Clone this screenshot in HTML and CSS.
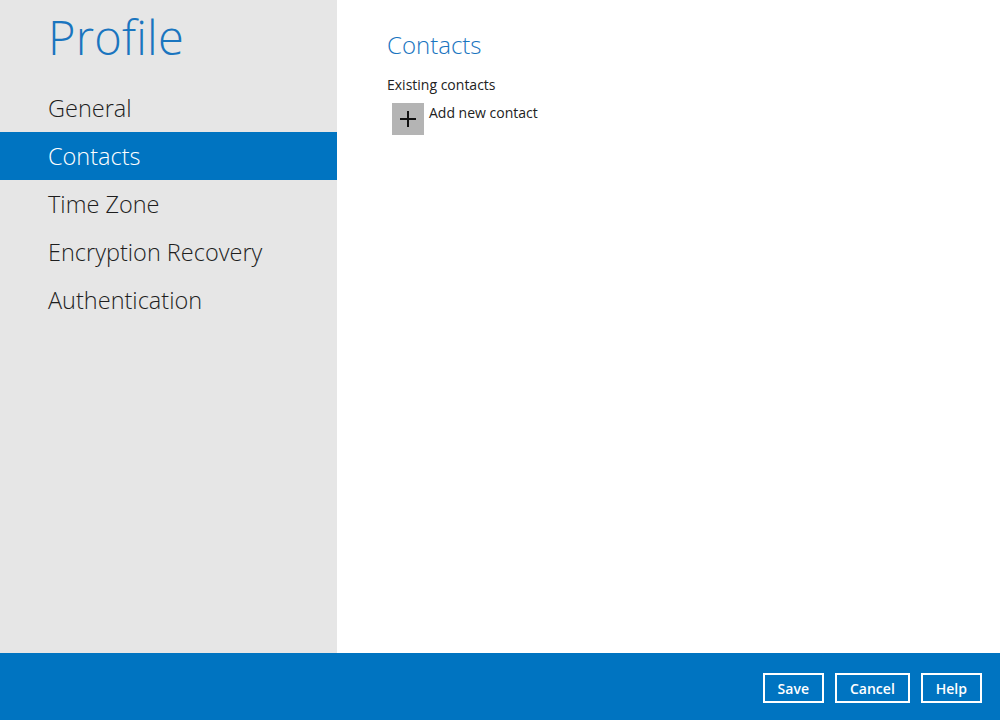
FILE: index.html
```html
<!DOCTYPE html>
<html lang="en">
<head>
<meta charset="UTF-8">
<title>Profile</title>
<link rel="stylesheet" href="styles.css">
</head>
<body>

<div class="main">
  <!-- menu -->
  <aside class="side">
    <h1>Profile</h1>
    <ul class="nav">
      <li>General</li>
      <li class="on">Contacts</li>
      <li>Time Zone</li>
      <li>Encryption Recovery</li>
      <li>Authentication</li>
    </ul>
  </aside>

  <!-- page -->
  <section class="content">
    <h2>Contacts</h2>
    <p class="label">Existing contacts</p>
    <div class="add">
      <span class="plus">
        <svg width="18" height="18" viewBox="0 0 18 18"><path d="M9 1v16M1 9h16" stroke="#111" stroke-width="2"/></svg>
      </span>
      <span>Add new contact</span>
    </div>
  </section>
</div>

<footer class="bar">
  <button>Save</button>
  <button>Cancel</button>
  <button>Help</button>
</footer>

</body>
</html>
```

FILE: styles.css
```css
:root{--blue:#0074c1;--side:#e6e6e6}
*{box-sizing:border-box}
html,body{height:100%}
body{
  margin:0;display:flex;flex-direction:column;
  font-family:'Open Sans','Noto Sans',sans-serif;color:#222}
.main{flex:1;display:flex;min-height:0}
.side{width:337px;background:var(--side);padding-top:4px}
.side h1{
  margin:0 0 14px 48px;font-size:47px;font-weight:300;
  color:#1a75bf;line-height:66px;letter-spacing:.2px}
.nav{list-style:none;margin:0;padding:0}
.nav li{
  height:48px;line-height:48px;padding-left:48px;
  font-size:23.5px;font-weight:300;color:#1e1e1e}
.nav li.on{background:var(--blue);color:#fff}
.content{flex:1;background:#fff;padding:27px 50px}
.content h2{
  margin:0;font-size:24px;font-weight:300;color:#1a75bf;line-height:36px}
.label{margin:12px 0 0;font-size:14px;line-height:20px;color:#222}
.add{display:flex;align-items:flex-start;margin:8px 0 0 5px;font-size:14px}
.plus{
  width:32px;height:32px;background:#b4b4b4;
  display:flex;align-items:center;justify-content:center;margin-right:5px}
.add span:last-child{line-height:20px}
.bar{
  height:67px;background:var(--blue);
  display:flex;justify-content:flex-end;align-items:center;gap:11px;
  padding:3px 18px 0 0}
.bar button{
  background:transparent;border:2px solid #fff;color:#fff;
  font-family:inherit;font-size:14px;font-weight:600;
  height:30px;padding:0 13px;cursor:pointer}
```
